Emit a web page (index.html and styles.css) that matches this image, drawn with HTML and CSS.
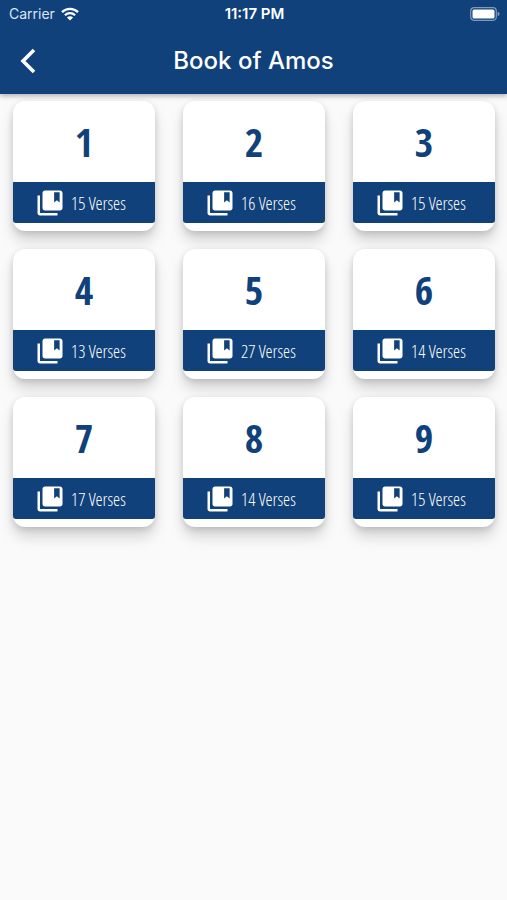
FILE: index.html
```html
<!DOCTYPE html>
<html lang="en">
<head>
<meta charset="utf-8">
<meta name="viewport" content="width=device-width, initial-scale=1">
<title>Book of Amos</title>
<link rel="stylesheet" href="styles.css">
</head>
<body>
<svg class="sprite" aria-hidden="true">
  <symbol id="bookmarks" viewBox="0 0 24 24">
    <path d="M4 6H2v14c0 1.100.9 2 2 2h14v-2H4V6z"/>
    <path fill-rule="evenodd" d="M20 2H8c-1.100 0-2 .9-2 2v12c0 1.100.9 2 2 2h12c1.100 0 2-.9 2-2V4c0-1.100-.9-2-2-2zM15.300 3.300h4.400v8.200l-2.200-1.700-2.200 1.700z"/>
  </symbol>
</svg>
<header class="top">
  <div class="status">
    <span class="carrier">Carrier
      <svg class="wifi" viewBox="0 0 18 14" aria-hidden="true">
        <path class="arc" d="M1 5.200a11.500 11.500 0 0 1 16 0M3.900 8.200a7.300 7.300 0 0 1 10.200 0"/>
        <path class="dot" d="M9 13.600L5.900 10.500a4.400 4.400 0 0 1 6.200 0z"/>
      </svg>
    </span>
    <time class="clock">11:17 PM</time>
    <svg class="battery" viewBox="0 0 30 14" aria-hidden="true">
      <rect class="shell" x=".7" y=".7" width="25.600" height="12.600" rx="3.500"/>
      <rect class="charge" x="2.500" y="2.500" width="22" height="9" rx="1.500"/>
      <path class="tip" d="M27.600 4.800q2 .6 2 2.200t-2 2.200z"/>
    </svg>
  </div>
  <div class="bar">
    <button class="back" type="button" aria-label="Back">
      <svg viewBox="0 0 16 26" aria-hidden="true"><path d="M14 2L3 13l11 11"/></svg>
    </button>
    <h1 class="title">Book of Amos</h1>
  </div>
</header>
<main class="chapters">
  <a class="card" href="#1"><span class="number">1</span><span class="verses"><svg class="icon" aria-hidden="true"><use href="#bookmarks"/></svg>15 Verses</span></a>
  <a class="card" href="#2"><span class="number">2</span><span class="verses"><svg class="icon" aria-hidden="true"><use href="#bookmarks"/></svg>16 Verses</span></a>
  <a class="card" href="#3"><span class="number">3</span><span class="verses"><svg class="icon" aria-hidden="true"><use href="#bookmarks"/></svg>15 Verses</span></a>
  <a class="card" href="#4"><span class="number">4</span><span class="verses"><svg class="icon" aria-hidden="true"><use href="#bookmarks"/></svg>13 Verses</span></a>
  <a class="card" href="#5"><span class="number">5</span><span class="verses"><svg class="icon" aria-hidden="true"><use href="#bookmarks"/></svg>27 Verses</span></a>
  <a class="card" href="#6"><span class="number">6</span><span class="verses"><svg class="icon" aria-hidden="true"><use href="#bookmarks"/></svg>14 Verses</span></a>
  <a class="card" href="#7"><span class="number">7</span><span class="verses"><svg class="icon" aria-hidden="true"><use href="#bookmarks"/></svg>17 Verses</span></a>
  <a class="card" href="#8"><span class="number">8</span><span class="verses"><svg class="icon" aria-hidden="true"><use href="#bookmarks"/></svg>14 Verses</span></a>
  <a class="card" href="#9"><span class="number">9</span><span class="verses"><svg class="icon" aria-hidden="true"><use href="#bookmarks"/></svg>15 Verses</span></a>
</main>
</body>
</html>
```
FILE: styles.css
```css
:root {
  --navy: #10417a;
  --page: #fafafa;
}

* {
  box-sizing: border-box;
}

body {
  margin: 0;
  min-height: 100vh;
  background: var(--page);
  font-family: Inter, "Liberation Sans", sans-serif;
}

.sprite {
  display: none;
}

.top {
  background: var(--navy);
  color: #fff;
  box-shadow: 0 2px 5px rgba(0, 0, 0, 0.3);
}

.status {
  display: grid;
  grid-template-columns: 1fr auto 1fr;
  align-items: center;
  height: 27px;
  padding: 0 7px 0 9px;
  font-size: 14px;
}

.carrier {
  display: flex;
  align-items: center;
  gap: 6px;
  color: #dbe6f2;
}

.wifi {
  width: 18px;
  height: 14px;
}

.arc {
  fill: none;
  stroke: #fff;
  stroke-width: 2.3;
}

.dot,
.charge {
  fill: #fff;
}

.clock {
  font-size: 15px;
  font-weight: 600;
}

.battery {
  justify-self: end;
  width: 30px;
  height: 14px;
}

.shell {
  fill: none;
  stroke: #7f9cbd;
  stroke-width: 1.2;
}

.tip {
  fill: #7f9cbd;
}

.bar {
  display: grid;
  grid-template-columns: 56px 1fr 56px;
  align-items: center;
  height: 67px;
}

.back {
  display: flex;
  align-items: center;
  justify-content: center;
  height: 48px;
  padding: 0;
  border: 0;
  background: none;
}

.back svg {
  width: 16px;
  height: 26px;
  fill: none;
  stroke: #fff;
  stroke-width: 3.6;
}

.title {
  margin: 0;
  font-size: 24px;
  font-weight: 500;
  text-align: center;
}

.chapters {
  display: grid;
  grid-template-columns: repeat(3, 1fr);
  gap: 18px 28px;
  padding: 7px 12px 32px 13px;
}

.card {
  display: flex;
  flex-direction: column;
  padding-bottom: 8px;
  border-radius: 12px;
  background: #fff;
  box-shadow: 0 10px 14px rgba(0, 0, 0, 0.15), 0 2px 6px rgba(0, 0, 0, 0.14);
  color: var(--navy);
  font-family: "Open Sans Condensed", "Liberation Sans Narrow", "Open Sans", sans-serif;
  text-decoration: none;
}

.number {
  font-size: 40px;
  font-weight: 700;
  line-height: 81px;
  text-align: center;
}

.verses {
  display: flex;
  align-items: center;
  gap: 6px;
  height: 41px;
  padding-left: 22px;
  border-radius: 0 0 3px 3px;
  background: var(--navy);
  color: #fff;
  font-family: "Open Sans Condensed Light", "Open Sans Condensed", "Liberation Sans Narrow", sans-serif;
  font-size: 18px;
  font-weight: 300;
  white-space: nowrap;
}

.icon {
  flex: none;
  width: 30px;
  height: 30px;
  fill: #fff;
}
```
